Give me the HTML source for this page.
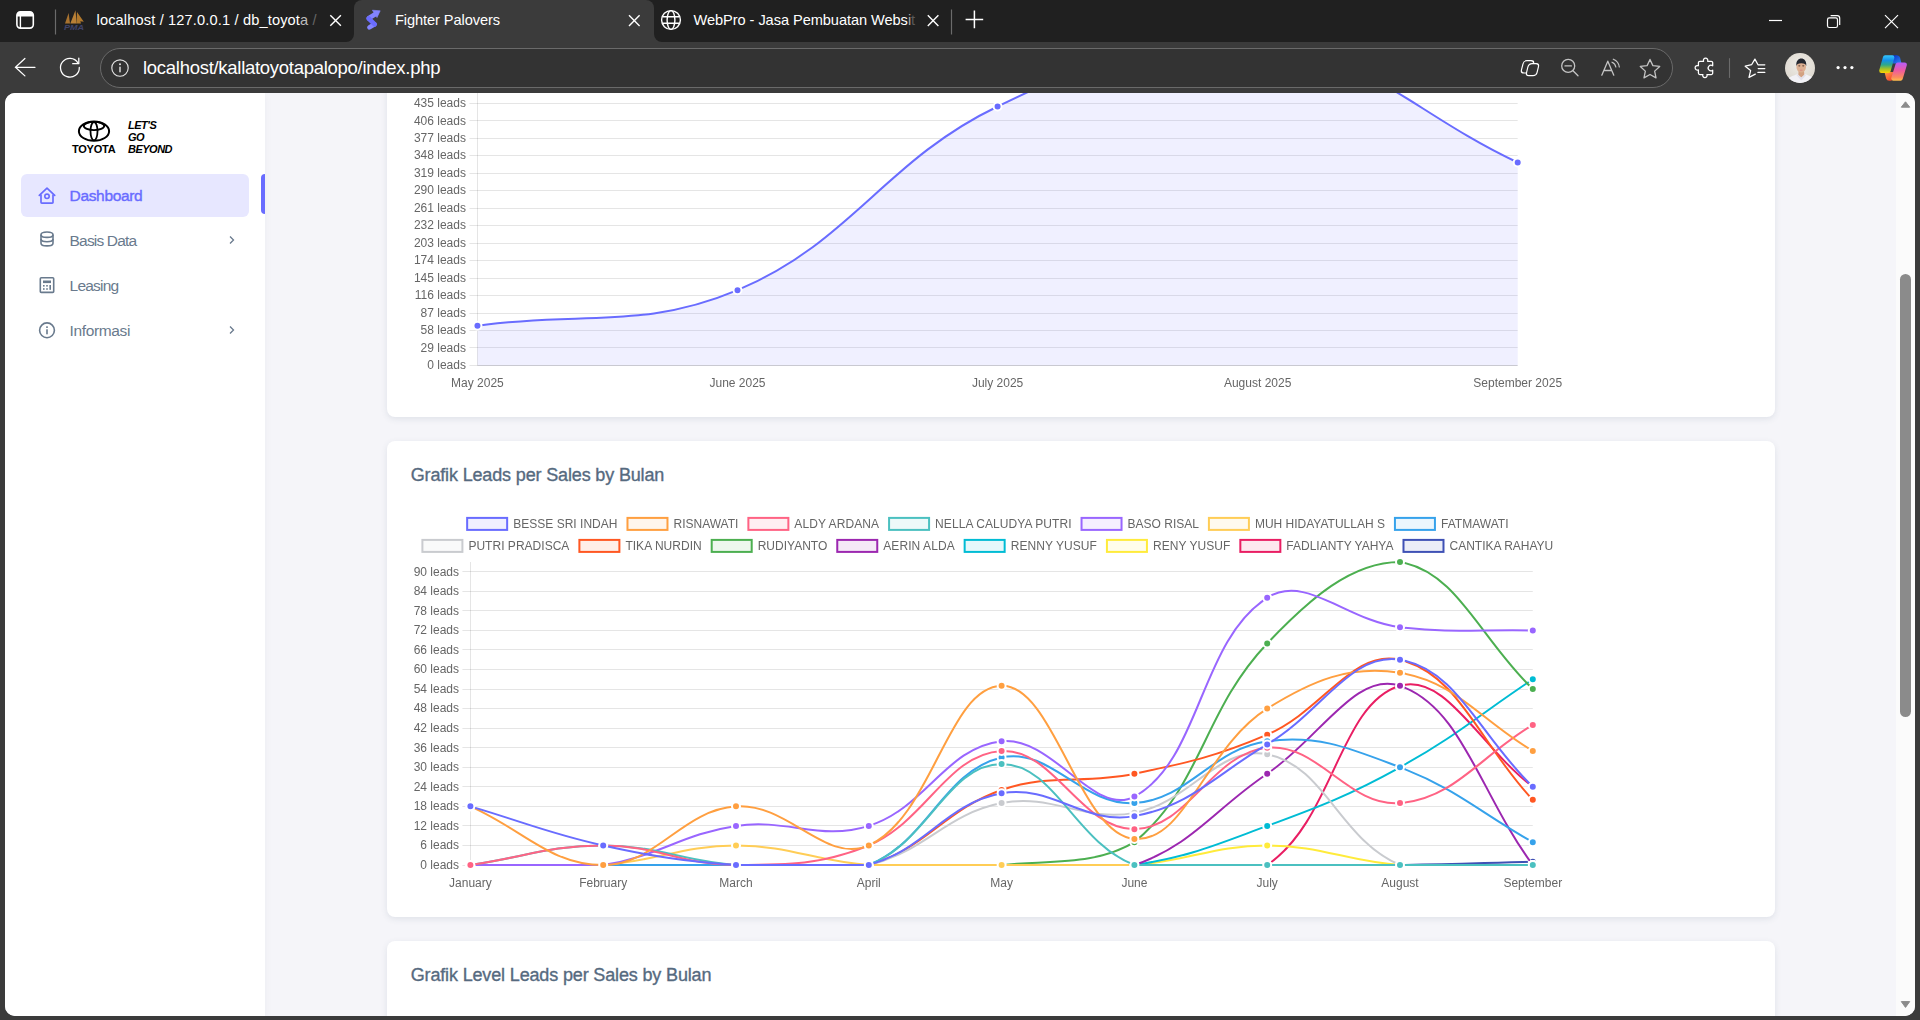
<!DOCTYPE html>
<html lang="en">
<head>
<meta charset="utf-8">
<title>Fighter Palovers</title>
<style>
*{box-sizing:border-box}
html,body{margin:0;padding:0}
body{width:1920px;height:1020px;overflow:hidden;position:relative;background:#3b3b3b;font-family:"Liberation Sans",sans-serif;}
.abs{position:absolute}
#tabbar{position:absolute;left:0;top:0;width:1920px;height:42px;background:#202020}
#toolbar{position:absolute;left:0;top:42px;width:1920px;height:51px;background:#3b3b3b}
.tabtxt{position:absolute;top:10px;font-size:14.6px;color:#fff;white-space:nowrap;line-height:20px}
#activetab{position:absolute;left:354px;top:0;width:300px;height:42px;background:#3b3b3b;border-radius:8px 8px 0 0}
#urlbox{position:absolute;left:100px;top:48px;width:1573px;height:40px;border-radius:20px;background:#333;border:1px solid #6a6a6a}
#url{position:absolute;left:143px;top:56.2px;font-size:18.5px;letter-spacing:-0.28px;line-height:24px;color:#fff;white-space:nowrap}
#page{position:absolute;left:5px;top:93px;width:1910px;height:923px;border-radius:10px;overflow:hidden;background:#f5f5f9}
#sidebar{position:absolute;left:0;top:0;width:260px;height:923px;background:#fff;box-shadow:0 2px 6px 0 rgba(161,172,184,.12)}
.card{position:absolute;left:381.5px;width:1388px;background:#fff;border-radius:8px;box-shadow:0 2px 6px 0 rgba(67,89,113,.12)}
.ctitle{position:absolute;left:405.7px;font-size:18px;letter-spacing:-0.15px;color:#566a7f;white-space:nowrap;line-height:22px;-webkit-text-stroke:0.35px #566a7f}
.mi{position:absolute;left:64.6px;font-size:15.5px;line-height:20px;color:#697a8d;white-space:nowrap}
#scroll{position:absolute;left:1891px;top:0;width:19px;height:923px;background:#fbfbfb}
#thumb{position:absolute;left:1895px;top:181.3px;width:11px;height:442.6px;border-radius:5.5px;background:#8b8b8b}
svg text.tk{font-family:"Liberation Sans",sans-serif;font-size:12px;fill:#666}
</style>
</head>
<body>
<div id="tabbar"></div>
<div id="toolbar"></div>
<div id="activetab"></div>

<!-- tab strip contents -->
<svg class="abs" style="left:0;top:0" width="1920" height="93" viewBox="0 0 1920 93">
  <!-- active tab flares -->
  <path d="M346 42A8 8 0 0 0 354 34V42Z" fill="#3b3b3b"/>
  <path d="M662 42A8 8 0 0 1 654 34V42Z" fill="#3b3b3b"/>
  <!-- tab actions icon -->
  <rect x="16.900" y="11.700" width="16.400" height="16.400" rx="3.500" fill="none" stroke="#fff" stroke-width="1.600"/>
  <path d="M16.900 16.500v-1.300a3.500 3.500 0 0 1 3.500-3.500h9.400a3.500 3.500 0 0 1 3.500 3.500v1.300z" fill="#fff"/>
  <path d="M20.400 16v12" stroke="#fff" stroke-width="1.400" fill="none"/>
  <line x1="55.500" y1="9.500" x2="55.500" y2="34.500" stroke="#6b6b6b" stroke-width="1.200"/>
  <!-- pma icon -->
  <path d="M65 23.500L68.600 13L70 23.500Z" fill="#a8722f"/>
  <path d="M70.300 23.500L75.500 10.200L76.600 23.500Z" fill="#b98036"/>
  <path d="M77 12l6.800 9.800l-3.500-0.600l0.700 2.300h-4.500z" fill="#b0782c"/>
  <text x="64" y="29.800" font-family="Liberation Sans, sans-serif" font-size="7.800" font-weight="bold" font-style="italic" fill="#40446a" textLength="20" lengthAdjust="spacingAndGlyphs">PMA</text>
  <!-- close icons -->
  <path d="M330.300 15.200l10.600 10.600M340.900 15.200l-10.600 10.600" stroke="#fff" stroke-width="1.400" fill="none"/>
  <path d="M629 15.300l10.600 10.600M639.600 15.300l-10.600 10.600" stroke="#fff" stroke-width="1.400" fill="none"/>
  <path d="M927.800 15.300l10.600 10.600M938.400 15.300l-10.600 10.600" stroke="#fff" stroke-width="1.400" fill="none"/>
  <!-- active tab icon -->
  <path d="M369.400 27.400L374.500 24.300" stroke="#8384ff" stroke-width="4.600" stroke-linecap="round" fill="none"/>
  <path d="M368.700 18.300L376 13.700" stroke="#8384ff" stroke-width="4.600" stroke-linecap="round" fill="none"/>
  <path d="M374.700 24.300L368.700 18.500" stroke="#6a6cff" stroke-width="4.600" stroke-linecap="round" fill="none"/>
  <path d="M372.400 10.200l7.800 0.600l-3.200 6.800z" fill="#8384ff" stroke="#8384ff" stroke-width="0.600" stroke-linejoin="round"/>
  <!-- globe -->
  <circle cx="671" cy="20" r="9.400" fill="none" stroke="#fff" stroke-width="1.400"/>
  <ellipse cx="671" cy="20" rx="3.900" ry="9.400" fill="none" stroke="#fff" stroke-width="1.400"/>
  <path d="M662.200 16.800h17.600M662.200 23.300h17.600" stroke="#fff" stroke-width="1.400"/>
  <line x1="951.500" y1="9.500" x2="951.500" y2="34.500" stroke="#6b6b6b" stroke-width="1.200"/>
  <path d="M974.400 10.600v17.600M965.600 19.400h17.600" stroke="#fff" stroke-width="1.500"/>
  <!-- window controls -->
  <path d="M1769 20.500h13" stroke="#fff" stroke-width="1.200"/>
  <rect x="1827.500" y="17.900" width="10" height="9.600" rx="1.800" fill="none" stroke="#fff" stroke-width="1.200"/>
  <path d="M1830.600 15.700h6.600a2.500 2.500 0 0 1 2.500 2.500v6.800" fill="none" stroke="#fff" stroke-width="1.200"/>
  <path d="M1885 15.100l13 13M1898 15.100l-13 13" stroke="#fff" stroke-width="1.200"/>
  <!-- back arrow -->
  <path d="M35 67.300H15.300M24.900 58.500l-9.400 8.800l9.400 8.600" stroke="#fff" stroke-width="1.250" fill="none" stroke-linecap="round" stroke-linejoin="round"/>
  <!-- refresh -->
  <path d="M77.900 62.800A9.400 9.400 0 1 0 79.300 67.400" stroke="#fff" stroke-width="1.250" fill="none" stroke-linecap="round"/>
  <path d="M78.800 58.100V63.700H72.700" stroke="#fff" stroke-width="1.250" fill="none" stroke-linecap="round" stroke-linejoin="round"/>
</svg>
<div id="urlbox"></div>
<svg class="abs" style="left:0;top:0" width="1920" height="93" viewBox="0 0 1920 93">
  <!-- info -->
  <circle cx="120" cy="68" r="8.200" fill="none" stroke="#e4e4e4" stroke-width="1.150"/>
  <circle cx="120" cy="64.300" r="1" fill="#e4e4e4"/><rect x="119.300" y="66.700" width="1.400" height="5.600" fill="#e4e4e4"/>
  <!-- split screen -->
  <rect x="1523.500" y="60.700" width="10.500" height="12.300" rx="3.200" fill="none" stroke="#fff" stroke-width="1.200" transform="skewX(-14) translate(15.400 0)"/>
  <rect x="1528.500" y="63.600" width="10.500" height="12" rx="3.200" fill="#333" stroke="#fff" stroke-width="1.200" transform="skewX(-14) translate(16.100 0)"/>
  <!-- zoom out -->
  <circle cx="1568.200" cy="65.900" r="6.500" fill="none" stroke="#c4c4c4" stroke-width="1.300"/>
  <path d="M1565 65.900h6.400M1573 70.800l5 5" stroke="#c4c4c4" stroke-width="1.300" stroke-linecap="round"/>
  <!-- read aloud -->
  <path d="M1601.800 75.200l6-14l6 14M1603.900 70.500h7.800" stroke="#c4c4c4" stroke-width="1.300" fill="none" stroke-linecap="round" stroke-linejoin="round"/>
  <path d="M1612 62.200a6 6 0 0 1 3.800 4.800M1613.300 59.200a9.500 9.500 0 0 1 6 7.800" stroke="#c4c4c4" stroke-width="1.200" fill="none" stroke-linecap="round"/>
  <!-- star -->
  <path d="M1650.00 59.40L1652.88 65.64L1659.70 66.45L1654.66 71.11L1656.00 77.85L1650.00 74.50L1644.00 77.85L1645.34 71.11L1640.30 66.45L1647.12 65.64Z" fill="none" stroke="#c4c4c4" stroke-width="1.300" stroke-linejoin="round"/>
  <!-- extensions -->
  <path d="M1699.900 61.250H1703.600A2.200 2.200 0 1 1 1707.600 61.250H1711.200A1.500 1.500 0 0 1 1712.700 62.750V65.800A2.800 2.800 0 1 0 1712.700 70.200V73.100A1.500 1.500 0 0 1 1711.200 74.600H1706.900A2.200 2.200 0 1 1 1702.900 74.600H1699.900A1.500 1.500 0 0 1 1698.400 73.100V69.800A2.250 2.250 0 1 1 1698.400 65.800V62.750A1.500 1.500 0 0 1 1699.900 61.250Z" fill="none" stroke="#fff" stroke-width="1.250" stroke-linejoin="round"/>
  <line x1="1729.500" y1="58.200" x2="1729.500" y2="77.900" stroke="#6b6b6b" stroke-width="1.100"/>
  <!-- favorites -->
  <path d="M1755.300 74.100L1749 77.400L1750.600 70.600L1745.200 66.200L1751.600 64.700L1754.900 59.100L1758 64.800H1764.800" fill="none" stroke="#fff" stroke-width="1.250" stroke-linejoin="round" stroke-linecap="round"/>
  <path d="M1758.200 68.600H1764.800M1757.900 72.400H1764.800" stroke="#fff" stroke-width="1.250" stroke-linecap="round"/>
  <!-- avatar -->
  <defs><radialGradient id="avbg" cx="0.5" cy="0.4" r="0.6"><stop offset="0" stop-color="#efece7"/><stop offset="1" stop-color="#ddd8cf"/></radialGradient></defs>
  <circle cx="1800" cy="68" r="15" fill="url(#avbg)"/>
  <clipPath id="av"><circle cx="1800" cy="68" r="15"/></clipPath>
  <g clip-path="url(#av)">
    <path d="M1786 84c0.500-5 3-7 8-8.500l4.500-2h5.500l4.500 2c5 1.500 7.500 3.500 8 8.500z" fill="#f2f1f6"/>
    <path d="M1798.700 70.500h5.200l0.500 4.500l-3.100 2.800l-3.100-2.800z" fill="#d3a182"/>
    <ellipse cx="1801.200" cy="67" rx="4.800" ry="5.500" fill="#ddb092"/>
    <path d="M1796.400 66.200c-1.400-10.200 11.200-10.200 9.800 0c-0.400-2-1.600-2.900-4.900-2.900s-4.500 0.900-4.900 2.900z" fill="#252830"/>
    <ellipse cx="1799.300" cy="65.800" rx="1.100" ry="0.600" fill="#5a4034"/><ellipse cx="1803.200" cy="65.800" rx="1.100" ry="0.600" fill="#5a4034"/>
    <ellipse cx="1801.200" cy="70.200" rx="1.500" ry="0.600" fill="#d98d86"/>
    <path d="M1797.800 74.300l3.500 3.300l3.500-3.300l1.300 0.800l-4.800 5.400l-4.800-5.400z" fill="#e2e0ea"/>
  </g>
  <!-- dots -->
  <circle cx="1838.100" cy="67.600" r="1.600" fill="#fff"/><circle cx="1845" cy="67.600" r="1.600" fill="#fff"/><circle cx="1851.900" cy="67.600" r="1.600" fill="#fff"/>
  <!-- copilot -->
  <defs>
    <linearGradient id="cpl" gradientUnits="userSpaceOnUse" x1="0" y1="55" x2="0" y2="73"><stop offset="0" stop-color="#36caff"/><stop offset="0.3" stop-color="#1590e8"/><stop offset="0.55" stop-color="#2fa88a"/><stop offset="0.76" stop-color="#9fc02c"/><stop offset="1" stop-color="#ffd500"/></linearGradient>
    <linearGradient id="cpr" gradientUnits="userSpaceOnUse" x1="0" y1="62" x2="0" y2="81"><stop offset="0" stop-color="#b25cff"/><stop offset="0.45" stop-color="#ee5aa0"/><stop offset="0.8" stop-color="#fb8a5e"/><stop offset="1" stop-color="#ffc24a"/></linearGradient>
    <linearGradient id="cpt" gradientUnits="userSpaceOnUse" x1="1894" y1="55" x2="1901" y2="63"><stop offset="0" stop-color="#0a34c8"/><stop offset="1" stop-color="#2f86f2"/></linearGradient>
    <linearGradient id="cpb" gradientUnits="userSpaceOnUse" x1="1886" y1="73" x2="1892" y2="81"><stop offset="0" stop-color="#ff9442"/><stop offset="1" stop-color="#f23e2c"/></linearGradient>
  </defs>
  <path d="M1892.500 55.300H1897Q1899.400 55.300 1900.100 57.800L1901.500 63.500H1892.500Z" fill="url(#cpt)"/>
  <path d="M1884.500 72H1893.500L1891.500 80.700H1889.200Q1886.800 80.700 1886.100 78.200Z" fill="url(#cpb)"/>
  <path d="M1885.100 57.500L1892.200 57.500L1888.500 70.700L1881.400 70.700Z" fill="url(#cpl)" stroke="url(#cpl)" stroke-width="4.400" stroke-linejoin="round"/>
  <path d="M1897.700 64.600L1904.700 64.600L1900.600 78.500L1893.400 78.500Z" fill="url(#cpr)" stroke="url(#cpr)" stroke-width="4.400" stroke-linejoin="round"/>
</svg>
<div class="tabtxt" style="left:96.5px;letter-spacing:0.15px">localhost / 127.0.0.1 / db_toyot<span style="color:#bbb">a</span> <span style="color:#666">/</span></div>
<div class="tabtxt" style="left:395px;letter-spacing:-0.08px">Fighter Palovers</div>
<div class="tabtxt" style="left:693.5px;letter-spacing:-0.06px">WebPro - Jasa Pembuatan Webs<span style="color:#aaa">i</span><span style="color:#5a5a5a">t</span></div>
<div id="url">localhost/kallatoyotapalopo/index.php</div>

<div id="page">
  <div id="sidebar">
    <!-- logo -->
    <svg class="abs" style="left:0;top:0" width="260" height="80" viewBox="5 93 260 80">
      <ellipse cx="94" cy="131.200" rx="15.100" ry="9.600" fill="none" stroke="#000" stroke-width="2"/>
      <ellipse cx="94" cy="126" rx="10.200" ry="4.100" fill="none" stroke="#000" stroke-width="1.900"/>
      <ellipse cx="94" cy="131.200" rx="3.500" ry="9.200" fill="none" stroke="#000" stroke-width="1.800"/>
    </svg>
    <div class="abs" id="toyota" style="left:67px;top:49.9px;font-size:11px;font-weight:bold;line-height:12px;color:#000;letter-spacing:-0.23px">TOYOTA</div>
    <div class="abs" id="lgb" style="left:123px;top:25.600px;font-size:11px;font-weight:bold;font-style:italic;line-height:12.050px;color:#000;letter-spacing:-0.5px">LET'S<br>GO<br>BEYOND</div>
    <!-- menu -->
    <div class="abs" style="left:16px;top:81px;width:228px;height:43px;border-radius:6px;background:#e7e7ff"></div>
    <div class="abs" style="left:256px;top:81px;width:4px;height:40px;border-radius:6px 0 0 6px;background:#696cff"></div>
    <div class="mi" id="m1" style="top:92.9px;letter-spacing:-0.35px;color:#696cff;-webkit-text-stroke:0.4px #696cff">Dashboard</div>
    <div class="mi" id="m2" style="top:137.9px;letter-spacing:-0.83px">Basis Data</div>
    <div class="mi" id="m3" style="top:182.9px;letter-spacing:-0.79px">Leasing</div>
    <div class="mi" id="m4" style="top:227.9px;letter-spacing:-0.36px">Informasi</div>
    <svg class="abs" style="left:0;top:0" width="260" height="400" viewBox="5 93 260 400">
      <!-- home -->
      <path d="M41 194.500v7.800a0.800 0.800 0 0 0 0.800 0.800h10.400a0.800 0.800 0 0 0 0.800-0.800v-7.800" fill="none" stroke="#696cff" stroke-width="1.700" stroke-linejoin="round"/>
      <path d="M39.300 195.300l7.700-7.100l7.700 7.100" fill="none" stroke="#696cff" stroke-width="1.700" stroke-linecap="round" stroke-linejoin="round"/>
      <circle cx="47" cy="196.300" r="2.200" fill="none" stroke="#696cff" stroke-width="1.600"/>
      <!-- database -->
      <ellipse cx="47" cy="234.700" rx="6" ry="2.700" fill="none" stroke="#697a8d" stroke-width="1.600"/>
      <path d="M41 234.700v8.500c0 1.500 2.700 2.700 6 2.700s6-1.200 6-2.700v-8.500" fill="none" stroke="#697a8d" stroke-width="1.600"/>
      <path d="M41 239c0 1.500 2.700 2.700 6 2.700s6-1.200 6-2.700" fill="none" stroke="#697a8d" stroke-width="1.600"/>
      <!-- calculator -->
      <rect x="40.300" y="277.800" width="13.400" height="14.600" rx="1" fill="none" stroke="#697a8d" stroke-width="1.600"/>
      <rect x="43" y="280.500" width="8" height="2.600" fill="#697a8d"/>
      <rect x="43" y="285" width="1.600" height="1.600" fill="#697a8d"/><rect x="46.200" y="285" width="1.600" height="1.600" fill="#697a8d"/><rect x="49.400" y="285" width="1.600" height="4.800" fill="#697a8d"/>
      <rect x="43" y="288.200" width="1.600" height="1.600" fill="#697a8d"/><rect x="46.200" y="288.200" width="1.600" height="1.600" fill="#697a8d"/>
      <!-- info -->
      <circle cx="47" cy="330.300" r="7.400" fill="none" stroke="#697a8d" stroke-width="1.600"/>
      <rect x="46.200" y="329.300" width="1.600" height="5" fill="#697a8d"/><rect x="46.200" y="326.300" width="1.600" height="1.700" fill="#697a8d"/>
      <!-- chevrons -->
      <path d="M230 236.500l3.500 3.500l-3.500 3.500" fill="none" stroke="#697a8d" stroke-width="1.300"/>
      <path d="M230 326.500l3.500 3.500l-3.500 3.500" fill="none" stroke="#697a8d" stroke-width="1.300"/>
    </svg>
  </div>

  <div class="card" style="top:-200px;height:524px"></div>
  <div class="card" style="top:348px;height:476px"></div>
  <div class="card" style="top:848px;height:300px"></div>
  <div class="ctitle" id="t2" style="top:370.7px">Grafik Leads per Sales by Bulan</div>
  <div class="ctitle" id="t3" style="top:870.7px">Grafik Level Leads per Sales by Bulan</div>

  <svg class="abs" style="left:0;top:0;will-change:transform" width="1910" height="923" viewBox="5 93 1910 923">
<line x1="469.45" x2="1517.70" y1="365.50" y2="365.50" stroke="rgba(0,0,0,0.1)" stroke-width="1"/>
<text x="465.95" y="369.00" text-anchor="end" class="tk">0 leads</text>
<line x1="469.45" x2="1517.70" y1="347.50" y2="347.50" stroke="rgba(0,0,0,0.1)" stroke-width="1"/>
<text x="465.95" y="351.54" text-anchor="end" class="tk">29 leads</text>
<line x1="469.45" x2="1517.70" y1="330.50" y2="330.50" stroke="rgba(0,0,0,0.1)" stroke-width="1"/>
<text x="465.95" y="334.08" text-anchor="end" class="tk">58 leads</text>
<line x1="469.45" x2="1517.70" y1="313.50" y2="313.50" stroke="rgba(0,0,0,0.1)" stroke-width="1"/>
<text x="465.95" y="316.62" text-anchor="end" class="tk">87 leads</text>
<line x1="469.45" x2="1517.70" y1="295.50" y2="295.50" stroke="rgba(0,0,0,0.1)" stroke-width="1"/>
<text x="465.95" y="299.16" text-anchor="end" class="tk">116 leads</text>
<line x1="469.45" x2="1517.70" y1="278.50" y2="278.50" stroke="rgba(0,0,0,0.1)" stroke-width="1"/>
<text x="465.95" y="281.70" text-anchor="end" class="tk">145 leads</text>
<line x1="469.45" x2="1517.70" y1="260.50" y2="260.50" stroke="rgba(0,0,0,0.1)" stroke-width="1"/>
<text x="465.95" y="264.24" text-anchor="end" class="tk">174 leads</text>
<line x1="469.45" x2="1517.70" y1="243.50" y2="243.50" stroke="rgba(0,0,0,0.1)" stroke-width="1"/>
<text x="465.95" y="246.78" text-anchor="end" class="tk">203 leads</text>
<line x1="469.45" x2="1517.70" y1="225.50" y2="225.50" stroke="rgba(0,0,0,0.1)" stroke-width="1"/>
<text x="465.95" y="229.32" text-anchor="end" class="tk">232 leads</text>
<line x1="469.45" x2="1517.70" y1="208.50" y2="208.50" stroke="rgba(0,0,0,0.1)" stroke-width="1"/>
<text x="465.95" y="211.86" text-anchor="end" class="tk">261 leads</text>
<line x1="469.45" x2="1517.70" y1="190.50" y2="190.50" stroke="rgba(0,0,0,0.1)" stroke-width="1"/>
<text x="465.95" y="194.40" text-anchor="end" class="tk">290 leads</text>
<line x1="469.45" x2="1517.70" y1="173.50" y2="173.50" stroke="rgba(0,0,0,0.1)" stroke-width="1"/>
<text x="465.95" y="176.94" text-anchor="end" class="tk">319 leads</text>
<line x1="469.45" x2="1517.70" y1="155.50" y2="155.50" stroke="rgba(0,0,0,0.1)" stroke-width="1"/>
<text x="465.95" y="159.48" text-anchor="end" class="tk">348 leads</text>
<line x1="469.45" x2="1517.70" y1="138.50" y2="138.50" stroke="rgba(0,0,0,0.1)" stroke-width="1"/>
<text x="465.95" y="142.02" text-anchor="end" class="tk">377 leads</text>
<line x1="469.45" x2="1517.70" y1="120.50" y2="120.50" stroke="rgba(0,0,0,0.1)" stroke-width="1"/>
<text x="465.95" y="124.56" text-anchor="end" class="tk">406 leads</text>
<line x1="469.45" x2="1517.70" y1="103.50" y2="103.50" stroke="rgba(0,0,0,0.1)" stroke-width="1"/>
<text x="465.95" y="107.10" text-anchor="end" class="tk">435 leads</text>
<line x1="469.45" x2="1517.70" y1="86.50" y2="86.50" stroke="rgba(0,0,0,0.1)" stroke-width="1"/>
<text x="465.95" y="89.64" text-anchor="end" class="tk">464 leads</text>
<line x1="469.45" x2="1517.70" y1="68.50" y2="68.50" stroke="rgba(0,0,0,0.1)" stroke-width="1"/>
<text x="465.95" y="72.18" text-anchor="end" class="tk">493 leads</text>
<line x1="477.50" x2="477.50" y1="60" y2="365.40" stroke="rgba(0,0,0,0.1)" stroke-width="1"/>
<line x1="477.45" x2="1517.70" y1="365.50" y2="365.50" stroke="rgba(0,0,0,0.1)" stroke-width="1"/>
<path d="M477.45,325.66C581.48,311.45 643.50,329.76 737.51,290.14C851.55,242.09 884.69,160.74 997.58,106.51C1092.74,60.80 1157.17,29.47 1257.64,40.28C1365.22,51.86 1413.67,113.61 1517.70,162.50L1517.70,365.40L477.45,365.40Z" fill="rgba(105,108,255,0.1)"/>
<path d="M477.45,325.66C581.48,311.45 643.50,329.76 737.51,290.14C851.55,242.09 884.69,160.74 997.58,106.51C1092.74,60.80 1157.17,29.47 1257.64,40.28C1365.22,51.86 1413.67,113.61 1517.70,162.50" fill="none" stroke="#696cff" stroke-width="2"/>
<circle cx="477.45" cy="325.66" r="4" fill="#696cff" stroke="#fff" stroke-width="2"/>
<circle cx="737.51" cy="290.14" r="4" fill="#696cff" stroke="#fff" stroke-width="2"/>
<circle cx="997.58" cy="106.51" r="4" fill="#696cff" stroke="#fff" stroke-width="2"/>
<circle cx="1257.64" cy="40.28" r="4" fill="#696cff" stroke="#fff" stroke-width="2"/>
<circle cx="1517.70" cy="162.50" r="4" fill="#696cff" stroke="#fff" stroke-width="2"/>
<text x="477.45" y="386.90" text-anchor="middle" class="tk">May 2025</text>
<text x="737.51" y="386.90" text-anchor="middle" class="tk">June 2025</text>
<text x="997.58" y="386.90" text-anchor="middle" class="tk">July 2025</text>
<text x="1257.64" y="386.90" text-anchor="middle" class="tk">August 2025</text>
<text x="1517.70" y="386.90" text-anchor="middle" class="tk">September 2025</text>
<line x1="462.40" x2="1532.80" y1="865.50" y2="865.50" stroke="rgba(0,0,0,0.1)" stroke-width="1"/>
<text x="459.00" y="868.85" text-anchor="end" class="tk">0 leads</text>
<line x1="462.40" x2="1532.80" y1="845.50" y2="845.50" stroke="rgba(0,0,0,0.1)" stroke-width="1"/>
<text x="459.00" y="849.30" text-anchor="end" class="tk">6 leads</text>
<line x1="462.40" x2="1532.80" y1="825.50" y2="825.50" stroke="rgba(0,0,0,0.1)" stroke-width="1"/>
<text x="459.00" y="829.75" text-anchor="end" class="tk">12 leads</text>
<line x1="462.40" x2="1532.80" y1="806.50" y2="806.50" stroke="rgba(0,0,0,0.1)" stroke-width="1"/>
<text x="459.00" y="810.20" text-anchor="end" class="tk">18 leads</text>
<line x1="462.40" x2="1532.80" y1="786.50" y2="786.50" stroke="rgba(0,0,0,0.1)" stroke-width="1"/>
<text x="459.00" y="790.66" text-anchor="end" class="tk">24 leads</text>
<line x1="462.40" x2="1532.80" y1="767.50" y2="767.50" stroke="rgba(0,0,0,0.1)" stroke-width="1"/>
<text x="459.00" y="771.11" text-anchor="end" class="tk">30 leads</text>
<line x1="462.40" x2="1532.80" y1="747.50" y2="747.50" stroke="rgba(0,0,0,0.1)" stroke-width="1"/>
<text x="459.00" y="751.56" text-anchor="end" class="tk">36 leads</text>
<line x1="462.40" x2="1532.80" y1="728.50" y2="728.50" stroke="rgba(0,0,0,0.1)" stroke-width="1"/>
<text x="459.00" y="732.01" text-anchor="end" class="tk">42 leads</text>
<line x1="462.40" x2="1532.80" y1="708.50" y2="708.50" stroke="rgba(0,0,0,0.1)" stroke-width="1"/>
<text x="459.00" y="712.46" text-anchor="end" class="tk">48 leads</text>
<line x1="462.40" x2="1532.80" y1="689.50" y2="689.50" stroke="rgba(0,0,0,0.1)" stroke-width="1"/>
<text x="459.00" y="692.91" text-anchor="end" class="tk">54 leads</text>
<line x1="462.40" x2="1532.80" y1="669.50" y2="669.50" stroke="rgba(0,0,0,0.1)" stroke-width="1"/>
<text x="459.00" y="673.37" text-anchor="end" class="tk">60 leads</text>
<line x1="462.40" x2="1532.80" y1="649.50" y2="649.50" stroke="rgba(0,0,0,0.1)" stroke-width="1"/>
<text x="459.00" y="653.82" text-anchor="end" class="tk">66 leads</text>
<line x1="462.40" x2="1532.80" y1="630.50" y2="630.50" stroke="rgba(0,0,0,0.1)" stroke-width="1"/>
<text x="459.00" y="634.27" text-anchor="end" class="tk">72 leads</text>
<line x1="462.40" x2="1532.80" y1="610.50" y2="610.50" stroke="rgba(0,0,0,0.1)" stroke-width="1"/>
<text x="459.00" y="614.72" text-anchor="end" class="tk">78 leads</text>
<line x1="462.40" x2="1532.80" y1="591.50" y2="591.50" stroke="rgba(0,0,0,0.1)" stroke-width="1"/>
<text x="459.00" y="595.17" text-anchor="end" class="tk">84 leads</text>
<line x1="462.40" x2="1532.80" y1="571.50" y2="571.50" stroke="rgba(0,0,0,0.1)" stroke-width="1"/>
<text x="459.00" y="575.62" text-anchor="end" class="tk">90 leads</text>
<line x1="470.50" x2="470.50" y1="562.00" y2="865.00" stroke="rgba(0,0,0,0.1)" stroke-width="1"/>
<line x1="470.40" x2="1532.80" y1="865.50" y2="865.50" stroke="rgba(0,0,0,0.1)" stroke-width="1"/>
<path d="M470.40,865.00C523.52,865.00 550.08,865.00 603.20,865.00C656.32,865.00 682.88,865.00 736.00,865.00C789.12,865.00 815.68,865.00 868.80,865.00C921.92,865.00 948.48,865.00 1001.60,865.00C1054.72,865.00 1081.28,865.00 1134.40,865.00C1187.52,865.00 1214.08,865.00 1267.20,865.00C1320.32,865.00 1346.89,865.00 1400.00,865.00C1453.13,864.35 1479.68,863.05 1532.80,861.74" fill="none" stroke="rgb(63,81,181)" stroke-width="2"/>
<circle cx="470.40" cy="865.00" r="4" fill="rgb(63,81,181)" stroke="#fff" stroke-width="2"/>
<circle cx="603.20" cy="865.00" r="4" fill="rgb(63,81,181)" stroke="#fff" stroke-width="2"/>
<circle cx="736.00" cy="865.00" r="4" fill="rgb(63,81,181)" stroke="#fff" stroke-width="2"/>
<circle cx="868.80" cy="865.00" r="4" fill="rgb(63,81,181)" stroke="#fff" stroke-width="2"/>
<circle cx="1001.60" cy="865.00" r="4" fill="rgb(63,81,181)" stroke="#fff" stroke-width="2"/>
<circle cx="1134.40" cy="865.00" r="4" fill="rgb(63,81,181)" stroke="#fff" stroke-width="2"/>
<circle cx="1267.20" cy="865.00" r="4" fill="rgb(63,81,181)" stroke="#fff" stroke-width="2"/>
<circle cx="1400.00" cy="865.00" r="4" fill="rgb(63,81,181)" stroke="#fff" stroke-width="2"/>
<circle cx="1532.80" cy="861.74" r="4" fill="rgb(63,81,181)" stroke="#fff" stroke-width="2"/>
<path d="M470.40,865.00C523.52,865.00 550.08,865.00 603.20,865.00C656.32,865.00 682.88,865.00 736.00,865.00C789.12,865.00 815.68,865.00 868.80,865.00C921.92,865.00 948.48,865.00 1001.60,865.00C1054.72,865.00 1081.28,865.00 1134.40,865.00C1187.52,865.00 1227.55,865.00 1267.20,865.00C1333.79,820.07 1339.22,703.70 1400.00,685.81C1445.46,672.42 1479.68,746.41 1532.80,786.81" fill="none" stroke="rgb(233,30,99)" stroke-width="2"/>
<circle cx="470.40" cy="865.00" r="4" fill="rgb(233,30,99)" stroke="#fff" stroke-width="2"/>
<circle cx="603.20" cy="865.00" r="4" fill="rgb(233,30,99)" stroke="#fff" stroke-width="2"/>
<circle cx="736.00" cy="865.00" r="4" fill="rgb(233,30,99)" stroke="#fff" stroke-width="2"/>
<circle cx="868.80" cy="865.00" r="4" fill="rgb(233,30,99)" stroke="#fff" stroke-width="2"/>
<circle cx="1001.60" cy="865.00" r="4" fill="rgb(233,30,99)" stroke="#fff" stroke-width="2"/>
<circle cx="1134.40" cy="865.00" r="4" fill="rgb(233,30,99)" stroke="#fff" stroke-width="2"/>
<circle cx="1267.20" cy="865.00" r="4" fill="rgb(233,30,99)" stroke="#fff" stroke-width="2"/>
<circle cx="1400.00" cy="685.81" r="4" fill="rgb(233,30,99)" stroke="#fff" stroke-width="2"/>
<circle cx="1532.80" cy="786.81" r="4" fill="rgb(233,30,99)" stroke="#fff" stroke-width="2"/>
<path d="M470.40,865.00C523.52,865.00 550.08,865.00 603.20,865.00C656.32,865.00 682.88,865.00 736.00,865.00C789.12,865.00 815.68,865.00 868.80,865.00C921.92,865.00 948.48,865.00 1001.60,865.00C1054.72,865.00 1081.56,865.00 1134.40,865.00C1187.80,861.07 1214.08,845.45 1267.20,845.45C1320.32,845.45 1346.60,861.07 1400.00,865.00C1452.84,865.00 1479.68,865.00 1532.80,865.00" fill="none" stroke="rgb(255,235,59)" stroke-width="2"/>
<circle cx="470.40" cy="865.00" r="4" fill="rgb(255,235,59)" stroke="#fff" stroke-width="2"/>
<circle cx="603.20" cy="865.00" r="4" fill="rgb(255,235,59)" stroke="#fff" stroke-width="2"/>
<circle cx="736.00" cy="865.00" r="4" fill="rgb(255,235,59)" stroke="#fff" stroke-width="2"/>
<circle cx="868.80" cy="865.00" r="4" fill="rgb(255,235,59)" stroke="#fff" stroke-width="2"/>
<circle cx="1001.60" cy="865.00" r="4" fill="rgb(255,235,59)" stroke="#fff" stroke-width="2"/>
<circle cx="1134.40" cy="865.00" r="4" fill="rgb(255,235,59)" stroke="#fff" stroke-width="2"/>
<circle cx="1267.20" cy="845.45" r="4" fill="rgb(255,235,59)" stroke="#fff" stroke-width="2"/>
<circle cx="1400.00" cy="865.00" r="4" fill="rgb(255,235,59)" stroke="#fff" stroke-width="2"/>
<circle cx="1532.80" cy="865.00" r="4" fill="rgb(255,235,59)" stroke="#fff" stroke-width="2"/>
<path d="M470.40,865.00C523.52,865.00 550.08,865.00 603.20,865.00C656.32,865.00 682.88,865.00 736.00,865.00C789.12,865.00 815.68,865.00 868.80,865.00C921.92,865.00 948.48,865.00 1001.60,865.00C1054.72,865.00 1082.38,865.00 1134.40,865.00C1188.62,857.02 1215.34,844.99 1267.20,825.90C1321.58,805.89 1349.34,795.22 1400.00,767.26C1455.58,736.58 1479.68,714.48 1532.80,679.29" fill="none" stroke="rgb(0,188,212)" stroke-width="2"/>
<circle cx="470.40" cy="865.00" r="4" fill="rgb(0,188,212)" stroke="#fff" stroke-width="2"/>
<circle cx="603.20" cy="865.00" r="4" fill="rgb(0,188,212)" stroke="#fff" stroke-width="2"/>
<circle cx="736.00" cy="865.00" r="4" fill="rgb(0,188,212)" stroke="#fff" stroke-width="2"/>
<circle cx="868.80" cy="865.00" r="4" fill="rgb(0,188,212)" stroke="#fff" stroke-width="2"/>
<circle cx="1001.60" cy="865.00" r="4" fill="rgb(0,188,212)" stroke="#fff" stroke-width="2"/>
<circle cx="1134.40" cy="865.00" r="4" fill="rgb(0,188,212)" stroke="#fff" stroke-width="2"/>
<circle cx="1267.20" cy="825.90" r="4" fill="rgb(0,188,212)" stroke="#fff" stroke-width="2"/>
<circle cx="1400.00" cy="767.26" r="4" fill="rgb(0,188,212)" stroke="#fff" stroke-width="2"/>
<circle cx="1532.80" cy="679.29" r="4" fill="rgb(0,188,212)" stroke="#fff" stroke-width="2"/>
<path d="M470.40,865.00C523.52,865.00 550.08,865.00 603.20,865.00C656.32,865.00 682.88,865.00 736.00,865.00C789.12,865.00 815.68,865.00 868.80,865.00C921.92,865.00 948.48,865.00 1001.60,865.00C1054.72,865.00 1086.40,865.00 1134.40,865.00C1192.64,845.00 1213.78,809.82 1267.20,773.77C1320.02,738.14 1355.74,670.60 1400.00,685.81C1461.98,707.09 1479.68,793.32 1532.80,865.00" fill="none" stroke="rgb(156,39,176)" stroke-width="2"/>
<circle cx="470.40" cy="865.00" r="4" fill="rgb(156,39,176)" stroke="#fff" stroke-width="2"/>
<circle cx="603.20" cy="865.00" r="4" fill="rgb(156,39,176)" stroke="#fff" stroke-width="2"/>
<circle cx="736.00" cy="865.00" r="4" fill="rgb(156,39,176)" stroke="#fff" stroke-width="2"/>
<circle cx="868.80" cy="865.00" r="4" fill="rgb(156,39,176)" stroke="#fff" stroke-width="2"/>
<circle cx="1001.60" cy="865.00" r="4" fill="rgb(156,39,176)" stroke="#fff" stroke-width="2"/>
<circle cx="1134.40" cy="865.00" r="4" fill="rgb(156,39,176)" stroke="#fff" stroke-width="2"/>
<circle cx="1267.20" cy="773.77" r="4" fill="rgb(156,39,176)" stroke="#fff" stroke-width="2"/>
<circle cx="1400.00" cy="685.81" r="4" fill="rgb(156,39,176)" stroke="#fff" stroke-width="2"/>
<circle cx="1532.80" cy="865.00" r="4" fill="rgb(156,39,176)" stroke="#fff" stroke-width="2"/>
<path d="M470.40,865.00C523.52,865.00 550.08,865.00 603.20,865.00C656.32,865.00 682.88,865.00 736.00,865.00C789.12,865.00 815.68,865.00 868.80,865.00C921.92,865.00 948.87,865.00 1001.60,865.00C1055.11,860.41 1096.10,865.00 1134.40,842.19C1202.34,785.52 1202.88,711.30 1267.20,643.45C1309.12,599.23 1351.26,562.00 1400.00,562.00C1457.50,571.87 1479.68,638.24 1532.80,689.06" fill="none" stroke="rgb(76,175,80)" stroke-width="2"/>
<circle cx="470.40" cy="865.00" r="4" fill="rgb(76,175,80)" stroke="#fff" stroke-width="2"/>
<circle cx="603.20" cy="865.00" r="4" fill="rgb(76,175,80)" stroke="#fff" stroke-width="2"/>
<circle cx="736.00" cy="865.00" r="4" fill="rgb(76,175,80)" stroke="#fff" stroke-width="2"/>
<circle cx="868.80" cy="865.00" r="4" fill="rgb(76,175,80)" stroke="#fff" stroke-width="2"/>
<circle cx="1001.60" cy="865.00" r="4" fill="rgb(76,175,80)" stroke="#fff" stroke-width="2"/>
<circle cx="1134.40" cy="842.19" r="4" fill="rgb(76,175,80)" stroke="#fff" stroke-width="2"/>
<circle cx="1267.20" cy="643.45" r="4" fill="rgb(76,175,80)" stroke="#fff" stroke-width="2"/>
<circle cx="1400.00" cy="562.00" r="4" fill="rgb(76,175,80)" stroke="#fff" stroke-width="2"/>
<circle cx="1532.80" cy="689.06" r="4" fill="rgb(76,175,80)" stroke="#fff" stroke-width="2"/>
<path d="M470.40,865.00C523.52,865.00 550.08,865.00 603.20,865.00C656.32,865.00 682.88,865.00 736.00,865.00C789.12,865.00 819.35,865.00 868.80,865.00C925.59,848.98 945.01,809.50 1001.60,790.06C1051.25,773.01 1082.19,784.66 1134.40,773.77C1188.43,762.51 1216.65,756.38 1267.20,734.68C1322.89,710.77 1353.11,648.24 1400.00,659.74C1459.35,674.30 1479.68,743.80 1532.80,799.84" fill="none" stroke="rgb(255,87,34)" stroke-width="2"/>
<circle cx="470.40" cy="865.00" r="4" fill="rgb(255,87,34)" stroke="#fff" stroke-width="2"/>
<circle cx="603.20" cy="865.00" r="4" fill="rgb(255,87,34)" stroke="#fff" stroke-width="2"/>
<circle cx="736.00" cy="865.00" r="4" fill="rgb(255,87,34)" stroke="#fff" stroke-width="2"/>
<circle cx="868.80" cy="865.00" r="4" fill="rgb(255,87,34)" stroke="#fff" stroke-width="2"/>
<circle cx="1001.60" cy="790.06" r="4" fill="rgb(255,87,34)" stroke="#fff" stroke-width="2"/>
<circle cx="1134.40" cy="773.77" r="4" fill="rgb(255,87,34)" stroke="#fff" stroke-width="2"/>
<circle cx="1267.20" cy="734.68" r="4" fill="rgb(255,87,34)" stroke="#fff" stroke-width="2"/>
<circle cx="1400.00" cy="659.74" r="4" fill="rgb(255,87,34)" stroke="#fff" stroke-width="2"/>
<circle cx="1532.80" cy="799.84" r="4" fill="rgb(255,87,34)" stroke="#fff" stroke-width="2"/>
<path d="M470.40,865.00C523.52,865.00 550.08,865.00 603.20,865.00C656.32,865.00 682.88,865.00 736.00,865.00C789.12,865.00 818.29,865.00 868.80,865.00C924.53,852.01 945.94,814.02 1001.60,803.10C1052.18,793.17 1083.57,822.22 1134.40,812.87C1189.81,802.67 1218.72,744.71 1267.20,754.23C1324.96,765.56 1339.91,839.94 1400.00,865.00C1446.15,865.00 1479.68,865.00 1532.80,865.00" fill="none" stroke="rgb(201,203,207)" stroke-width="2"/>
<circle cx="470.40" cy="865.00" r="4" fill="rgb(201,203,207)" stroke="#fff" stroke-width="2"/>
<circle cx="603.20" cy="865.00" r="4" fill="rgb(201,203,207)" stroke="#fff" stroke-width="2"/>
<circle cx="736.00" cy="865.00" r="4" fill="rgb(201,203,207)" stroke="#fff" stroke-width="2"/>
<circle cx="868.80" cy="865.00" r="4" fill="rgb(201,203,207)" stroke="#fff" stroke-width="2"/>
<circle cx="1001.60" cy="803.10" r="4" fill="rgb(201,203,207)" stroke="#fff" stroke-width="2"/>
<circle cx="1134.40" cy="812.87" r="4" fill="rgb(201,203,207)" stroke="#fff" stroke-width="2"/>
<circle cx="1267.20" cy="754.23" r="4" fill="rgb(201,203,207)" stroke="#fff" stroke-width="2"/>
<circle cx="1400.00" cy="865.00" r="4" fill="rgb(201,203,207)" stroke="#fff" stroke-width="2"/>
<circle cx="1532.80" cy="865.00" r="4" fill="rgb(201,203,207)" stroke="#fff" stroke-width="2"/>
<path d="M470.40,865.00C523.52,865.00 550.08,865.00 603.20,865.00C656.32,865.00 682.88,865.00 736.00,865.00C789.12,865.00 822.34,865.00 868.80,865.00C928.58,840.80 943.28,771.08 1001.60,757.48C1049.52,746.31 1082.41,806.29 1134.40,803.10C1188.65,799.77 1211.97,748.65 1267.20,741.19C1318.21,734.31 1350.05,748.26 1400.00,767.26C1456.29,788.66 1479.68,812.22 1532.80,842.19" fill="none" stroke="rgb(54,162,235)" stroke-width="2"/>
<circle cx="470.40" cy="865.00" r="4" fill="rgb(54,162,235)" stroke="#fff" stroke-width="2"/>
<circle cx="603.20" cy="865.00" r="4" fill="rgb(54,162,235)" stroke="#fff" stroke-width="2"/>
<circle cx="736.00" cy="865.00" r="4" fill="rgb(54,162,235)" stroke="#fff" stroke-width="2"/>
<circle cx="868.80" cy="865.00" r="4" fill="rgb(54,162,235)" stroke="#fff" stroke-width="2"/>
<circle cx="1001.60" cy="757.48" r="4" fill="rgb(54,162,235)" stroke="#fff" stroke-width="2"/>
<circle cx="1134.40" cy="803.10" r="4" fill="rgb(54,162,235)" stroke="#fff" stroke-width="2"/>
<circle cx="1267.20" cy="741.19" r="4" fill="rgb(54,162,235)" stroke="#fff" stroke-width="2"/>
<circle cx="1400.00" cy="767.26" r="4" fill="rgb(54,162,235)" stroke="#fff" stroke-width="2"/>
<circle cx="1532.80" cy="842.19" r="4" fill="rgb(54,162,235)" stroke="#fff" stroke-width="2"/>
<path d="M470.40,865.00C523.52,865.00 550.36,865.00 603.20,865.00C656.60,861.07 682.88,845.45 736.00,845.45C789.12,845.45 815.40,861.07 868.80,865.00C921.64,865.00 948.48,865.00 1001.60,865.00C1054.72,865.00 1081.28,865.00 1134.40,865.00C1187.52,865.00 1214.08,865.00 1267.20,865.00C1320.32,865.00 1346.88,865.00 1400.00,865.00C1453.12,865.00 1479.68,865.00 1532.80,865.00" fill="none" stroke="rgb(255,205,86)" stroke-width="2"/>
<circle cx="470.40" cy="865.00" r="4" fill="rgb(255,205,86)" stroke="#fff" stroke-width="2"/>
<circle cx="603.20" cy="865.00" r="4" fill="rgb(255,205,86)" stroke="#fff" stroke-width="2"/>
<circle cx="736.00" cy="845.45" r="4" fill="rgb(255,205,86)" stroke="#fff" stroke-width="2"/>
<circle cx="868.80" cy="865.00" r="4" fill="rgb(255,205,86)" stroke="#fff" stroke-width="2"/>
<circle cx="1001.60" cy="865.00" r="4" fill="rgb(255,205,86)" stroke="#fff" stroke-width="2"/>
<circle cx="1134.40" cy="865.00" r="4" fill="rgb(255,205,86)" stroke="#fff" stroke-width="2"/>
<circle cx="1267.20" cy="865.00" r="4" fill="rgb(255,205,86)" stroke="#fff" stroke-width="2"/>
<circle cx="1400.00" cy="865.00" r="4" fill="rgb(255,205,86)" stroke="#fff" stroke-width="2"/>
<circle cx="1532.80" cy="865.00" r="4" fill="rgb(255,205,86)" stroke="#fff" stroke-width="2"/>
<path d="M470.40,865.00C523.52,865.00 551.18,865.00 603.20,865.00C657.42,857.02 681.78,833.89 736.00,825.90C788.02,818.25 820.20,841.40 868.80,825.90C926.44,807.52 946.08,747.32 1001.60,741.19C1052.32,735.59 1094.48,818.13 1134.40,796.58C1200.72,760.79 1199.49,641.03 1267.20,597.84C1305.73,573.26 1346.26,620.57 1400.00,627.16C1452.50,633.60 1479.68,629.12 1532.80,630.42" fill="none" stroke="rgb(153,102,255)" stroke-width="2"/>
<circle cx="470.40" cy="865.00" r="4" fill="rgb(153,102,255)" stroke="#fff" stroke-width="2"/>
<circle cx="603.20" cy="865.00" r="4" fill="rgb(153,102,255)" stroke="#fff" stroke-width="2"/>
<circle cx="736.00" cy="825.90" r="4" fill="rgb(153,102,255)" stroke="#fff" stroke-width="2"/>
<circle cx="868.80" cy="825.90" r="4" fill="rgb(153,102,255)" stroke="#fff" stroke-width="2"/>
<circle cx="1001.60" cy="741.19" r="4" fill="rgb(153,102,255)" stroke="#fff" stroke-width="2"/>
<circle cx="1134.40" cy="796.58" r="4" fill="rgb(153,102,255)" stroke="#fff" stroke-width="2"/>
<circle cx="1267.20" cy="597.84" r="4" fill="rgb(153,102,255)" stroke="#fff" stroke-width="2"/>
<circle cx="1400.00" cy="627.16" r="4" fill="rgb(153,102,255)" stroke="#fff" stroke-width="2"/>
<circle cx="1532.80" cy="630.42" r="4" fill="rgb(153,102,255)" stroke="#fff" stroke-width="2"/>
<path d="M470.40,865.00C523.52,857.18 550.08,845.45 603.20,845.45C656.32,845.45 682.60,861.07 736.00,865.00C788.84,865.00 821.72,865.00 868.80,865.00C927.96,842.50 948.48,764.00 1001.60,764.00C1054.72,764.00 1075.24,842.50 1134.40,865.00C1181.48,865.00 1214.08,865.00 1267.20,865.00C1320.32,865.00 1346.88,865.00 1400.00,865.00C1453.12,865.00 1479.68,865.00 1532.80,865.00" fill="none" stroke="rgb(75,192,192)" stroke-width="2"/>
<circle cx="470.40" cy="865.00" r="4" fill="rgb(75,192,192)" stroke="#fff" stroke-width="2"/>
<circle cx="603.20" cy="845.45" r="4" fill="rgb(75,192,192)" stroke="#fff" stroke-width="2"/>
<circle cx="736.00" cy="865.00" r="4" fill="rgb(75,192,192)" stroke="#fff" stroke-width="2"/>
<circle cx="868.80" cy="865.00" r="4" fill="rgb(75,192,192)" stroke="#fff" stroke-width="2"/>
<circle cx="1001.60" cy="764.00" r="4" fill="rgb(75,192,192)" stroke="#fff" stroke-width="2"/>
<circle cx="1134.40" cy="865.00" r="4" fill="rgb(75,192,192)" stroke="#fff" stroke-width="2"/>
<circle cx="1267.20" cy="865.00" r="4" fill="rgb(75,192,192)" stroke="#fff" stroke-width="2"/>
<circle cx="1400.00" cy="865.00" r="4" fill="rgb(75,192,192)" stroke="#fff" stroke-width="2"/>
<circle cx="1532.80" cy="865.00" r="4" fill="rgb(75,192,192)" stroke="#fff" stroke-width="2"/>
<path d="M470.40,865.00C523.52,857.18 550.08,845.45 603.20,845.45C656.32,845.45 682.88,865.00 736.00,865.00C789.12,865.00 820.82,865.00 868.80,845.45C927.06,820.44 946.99,754.32 1001.60,750.97C1053.23,747.80 1081.57,829.81 1134.40,829.16C1187.81,828.51 1211.97,753.13 1267.20,747.71C1318.21,742.70 1348.70,807.50 1400.00,803.10C1454.94,798.38 1479.68,756.18 1532.80,724.90" fill="none" stroke="rgb(255,99,132)" stroke-width="2"/>
<circle cx="470.40" cy="865.00" r="4" fill="rgb(255,99,132)" stroke="#fff" stroke-width="2"/>
<circle cx="603.20" cy="845.45" r="4" fill="rgb(255,99,132)" stroke="#fff" stroke-width="2"/>
<circle cx="736.00" cy="865.00" r="4" fill="rgb(255,99,132)" stroke="#fff" stroke-width="2"/>
<circle cx="868.80" cy="845.45" r="4" fill="rgb(255,99,132)" stroke="#fff" stroke-width="2"/>
<circle cx="1001.60" cy="750.97" r="4" fill="rgb(255,99,132)" stroke="#fff" stroke-width="2"/>
<circle cx="1134.40" cy="829.16" r="4" fill="rgb(255,99,132)" stroke="#fff" stroke-width="2"/>
<circle cx="1267.20" cy="747.71" r="4" fill="rgb(255,99,132)" stroke="#fff" stroke-width="2"/>
<circle cx="1400.00" cy="803.10" r="4" fill="rgb(255,99,132)" stroke="#fff" stroke-width="2"/>
<circle cx="1532.80" cy="724.90" r="4" fill="rgb(255,99,132)" stroke="#fff" stroke-width="2"/>
<path d="M470.40,806.35C523.52,829.81 550.08,865.00 603.20,865.00C656.32,865.00 681.62,810.36 736.00,806.35C787.86,802.54 826.30,864.74 868.80,845.45C932.54,816.52 947.84,687.13 1001.60,685.81C1054.08,684.52 1079.01,834.18 1134.40,838.94C1185.25,843.30 1206.12,746.83 1267.20,708.61C1312.36,680.36 1349.90,664.78 1400.00,672.77C1456.14,681.73 1479.68,719.69 1532.80,750.97" fill="none" stroke="rgb(255,159,64)" stroke-width="2"/>
<circle cx="470.40" cy="806.35" r="4" fill="rgb(255,159,64)" stroke="#fff" stroke-width="2"/>
<circle cx="603.20" cy="865.00" r="4" fill="rgb(255,159,64)" stroke="#fff" stroke-width="2"/>
<circle cx="736.00" cy="806.35" r="4" fill="rgb(255,159,64)" stroke="#fff" stroke-width="2"/>
<circle cx="868.80" cy="845.45" r="4" fill="rgb(255,159,64)" stroke="#fff" stroke-width="2"/>
<circle cx="1001.60" cy="685.81" r="4" fill="rgb(255,159,64)" stroke="#fff" stroke-width="2"/>
<circle cx="1134.40" cy="838.94" r="4" fill="rgb(255,159,64)" stroke="#fff" stroke-width="2"/>
<circle cx="1267.20" cy="708.61" r="4" fill="rgb(255,159,64)" stroke="#fff" stroke-width="2"/>
<circle cx="1400.00" cy="672.77" r="4" fill="rgb(255,159,64)" stroke="#fff" stroke-width="2"/>
<circle cx="1532.80" cy="750.97" r="4" fill="rgb(255,159,64)" stroke="#fff" stroke-width="2"/>
<path d="M470.40,806.35C523.52,821.99 549.26,833.54 603.20,845.45C655.50,857.00 682.60,861.07 736.00,865.00C788.84,865.00 819.07,865.00 868.80,865.00C925.31,849.75 945.47,803.65 1001.60,793.32C1051.71,784.10 1084.29,825.35 1134.40,816.13C1190.53,805.80 1215.22,775.06 1267.20,744.45C1321.46,712.50 1350.97,651.92 1400.00,659.74C1457.21,668.87 1479.68,735.98 1532.80,786.81" fill="none" stroke="rgb(105,108,255)" stroke-width="2"/>
<circle cx="470.40" cy="806.35" r="4" fill="rgb(105,108,255)" stroke="#fff" stroke-width="2"/>
<circle cx="603.20" cy="845.45" r="4" fill="rgb(105,108,255)" stroke="#fff" stroke-width="2"/>
<circle cx="736.00" cy="865.00" r="4" fill="rgb(105,108,255)" stroke="#fff" stroke-width="2"/>
<circle cx="868.80" cy="865.00" r="4" fill="rgb(105,108,255)" stroke="#fff" stroke-width="2"/>
<circle cx="1001.60" cy="793.32" r="4" fill="rgb(105,108,255)" stroke="#fff" stroke-width="2"/>
<circle cx="1134.40" cy="816.13" r="4" fill="rgb(105,108,255)" stroke="#fff" stroke-width="2"/>
<circle cx="1267.20" cy="744.45" r="4" fill="rgb(105,108,255)" stroke="#fff" stroke-width="2"/>
<circle cx="1400.00" cy="659.74" r="4" fill="rgb(105,108,255)" stroke="#fff" stroke-width="2"/>
<circle cx="1532.80" cy="786.81" r="4" fill="rgb(105,108,255)" stroke="#fff" stroke-width="2"/>
<text x="470.40" y="887.00" text-anchor="middle" class="tk">January</text>
<text x="603.20" y="887.00" text-anchor="middle" class="tk">February</text>
<text x="736.00" y="887.00" text-anchor="middle" class="tk">March</text>
<text x="868.80" y="887.00" text-anchor="middle" class="tk">April</text>
<text x="1001.60" y="887.00" text-anchor="middle" class="tk">May</text>
<text x="1134.40" y="887.00" text-anchor="middle" class="tk">June</text>
<text x="1267.20" y="887.00" text-anchor="middle" class="tk">July</text>
<text x="1400.00" y="887.00" text-anchor="middle" class="tk">August</text>
<text x="1532.80" y="887.00" text-anchor="middle" class="tk">September</text>
<rect x="467.15" y="517.90" width="40" height="12" fill="rgba(105,108,255,0.1)" stroke="rgb(105,108,255)" stroke-width="2"/>
<text x="513.15" y="527.70" class="tk" textLength="104.33">BESSE SRI INDAH</text>
<rect x="627.48" y="517.90" width="40" height="12" fill="rgba(255,159,64,0.1)" stroke="rgb(255,159,64)" stroke-width="2"/>
<text x="673.48" y="527.70" class="tk" textLength="64.89">RISNAWATI</text>
<rect x="748.37" y="517.90" width="40" height="12" fill="rgba(255,99,132,0.1)" stroke="rgb(255,99,132)" stroke-width="2"/>
<text x="794.37" y="527.70" class="tk" textLength="84.71">ALDY ARDANA</text>
<rect x="889.08" y="517.90" width="40" height="12" fill="rgba(75,192,192,0.1)" stroke="rgb(75,192,192)" stroke-width="2"/>
<text x="935.08" y="527.70" class="tk" textLength="136.46">NELLA CALUDYA PUTRI</text>
<rect x="1081.54" y="517.90" width="40" height="12" fill="rgba(153,102,255,0.1)" stroke="rgb(153,102,255)" stroke-width="2"/>
<text x="1127.54" y="527.70" class="tk" textLength="71.37">BASO RISAL</text>
<rect x="1208.91" y="517.90" width="40" height="12" fill="rgba(255,205,86,0.1)" stroke="rgb(255,205,86)" stroke-width="2"/>
<text x="1254.91" y="527.70" class="tk" textLength="130.02">MUH HIDAYATULLAH S</text>
<rect x="1394.93" y="517.90" width="40" height="12" fill="rgba(54,162,235,0.1)" stroke="rgb(54,162,235)" stroke-width="2"/>
<text x="1440.93" y="527.70" class="tk" textLength="67.63">FATMAWATI</text>
<rect x="422.40" y="539.90" width="40" height="12" fill="rgba(201,203,207,0.1)" stroke="rgb(201,203,207)" stroke-width="2"/>
<text x="468.40" y="549.70" class="tk" textLength="100.98">PUTRI PRADISCA</text>
<rect x="579.39" y="539.90" width="40" height="12" fill="rgba(255,87,34,0.1)" stroke="rgb(255,87,34)" stroke-width="2"/>
<text x="625.39" y="549.70" class="tk" textLength="76.31">TIKA NURDIN</text>
<rect x="711.70" y="539.90" width="40" height="12" fill="rgba(76,175,80,0.1)" stroke="rgb(76,175,80)" stroke-width="2"/>
<text x="757.70" y="549.70" class="tk" textLength="69.56">RUDIYANTO</text>
<rect x="837.26" y="539.90" width="40" height="12" fill="rgba(156,39,176,0.1)" stroke="rgb(156,39,176)" stroke-width="2"/>
<text x="883.26" y="549.70" class="tk" textLength="71.40">AERIN ALDA</text>
<rect x="964.65" y="539.90" width="40" height="12" fill="rgba(0,188,212,0.1)" stroke="rgb(0,188,212)" stroke-width="2"/>
<text x="1010.65" y="549.70" class="tk" textLength="86.28">RENNY YUSUF</text>
<rect x="1106.93" y="539.90" width="40" height="12" fill="rgba(255,235,59,0.1)" stroke="rgb(255,235,59)" stroke-width="2"/>
<text x="1152.93" y="549.70" class="tk" textLength="77.41">RENY YUSUF</text>
<rect x="1240.34" y="539.90" width="40" height="12" fill="rgba(233,30,99,0.1)" stroke="rgb(233,30,99)" stroke-width="2"/>
<text x="1286.34" y="549.70" class="tk" textLength="107.15">FADLIANTY YAHYA</text>
<rect x="1403.49" y="539.90" width="40" height="12" fill="rgba(63,81,181,0.1)" stroke="rgb(63,81,181)" stroke-width="2"/>
<text x="1449.49" y="549.70" class="tk" textLength="103.80">CANTIKA RAHAYU</text>
  </svg>

  <div id="scroll">
    <svg class="abs" style="left:0;top:0" width="19" height="923" viewBox="0 0 19 923">
      <path d="M5.300 14.200L9.500 8.800L13.700 14.200Z" fill="#8b8b8b" stroke="#8b8b8b" stroke-width="1" stroke-linejoin="round"/>
      <path d="M5.300 908.600L13.700 908.600L9.500 914.400Z" fill="#8b8b8b" stroke="#8b8b8b" stroke-width="1" stroke-linejoin="round"/>
    </svg>
  </div>
  <div id="thumb"></div>
</div>
</body>
</html>
